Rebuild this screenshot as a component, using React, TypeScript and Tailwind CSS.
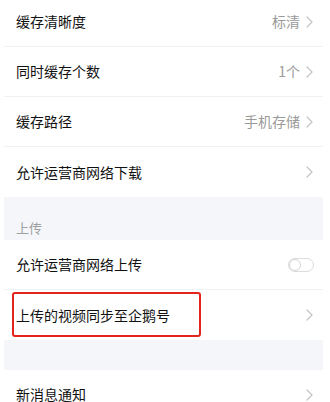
import React from "react";

const font = { fontFamily: '"Noto Sans CJK SC", "Noto Sans", sans-serif' };

function Chevron() {
  return (
    <svg width="7" height="12" viewBox="0 0 7 12" className="shrink-0">
      <path d="M1 1 L6 6 L1 11" fill="none" stroke="#c4c4c4" strokeWidth="1.2" strokeLinecap="round" strokeLinejoin="round" />
    </svg>
  );
}

function Row({ title, value, last, children }: { title: string; value?: string; last?: boolean; children?: React.ReactNode }) {
  return (
    <div className={`relative flex h-[50px] items-center justify-between pl-[12px] pr-[10px] ${last ? "" : "border-b border-[#f1f2f4]"}`}>
      <span className="text-[14px] text-[#111111]">{title}</span>
      <div className="flex items-center gap-[6px]">
        {value && <span className="text-[14px] text-[#9a9a9a]">{value}</span>}
        {children ?? <Chevron />}
      </div>
    </div>
  );
}

export default function App() {
  return (
    <div className="h-[402px] w-[330px] overflow-hidden bg-white" style={font}>
      <div className="ml-[4px] w-[319px] -mt-[3px]">
        <Row title="缓存清晰度" value="标清" />
        <Row title="同时缓存个数" value="1个" />
        <Row title="缓存路径" value="手机存储" />
        <Row title="允许运营商网络下载" last />
        <div className="flex h-[43px] items-end bg-[#f4f6f9] pb-[3px] pl-[12px]">
          <span className="text-[13px] text-[#a0a0a0]">上传</span>
        </div>
        <Row title="允许运营商网络上传">
          <div className="mr-[-1px] flex h-[14px] w-[26px] items-center rounded-full border border-[#dcdcdc] bg-white">
            <div className="h-[12px] w-[12px] rounded-full border border-[#d4d4d4] bg-white" />
          </div>
        </Row>
        <div className="relative">
          <Row title="上传的视频同步至企鹅号" last />
          <div className="absolute left-[8px] top-[2px] h-[45px] w-[189px] rounded-[3px] border-2 border-[#e3241d]" />
        </div>
        <div className="h-[30px] bg-[#f4f6f9]" />
        <Row title="新消息通知" />
      </div>
    </div>
  );
}
